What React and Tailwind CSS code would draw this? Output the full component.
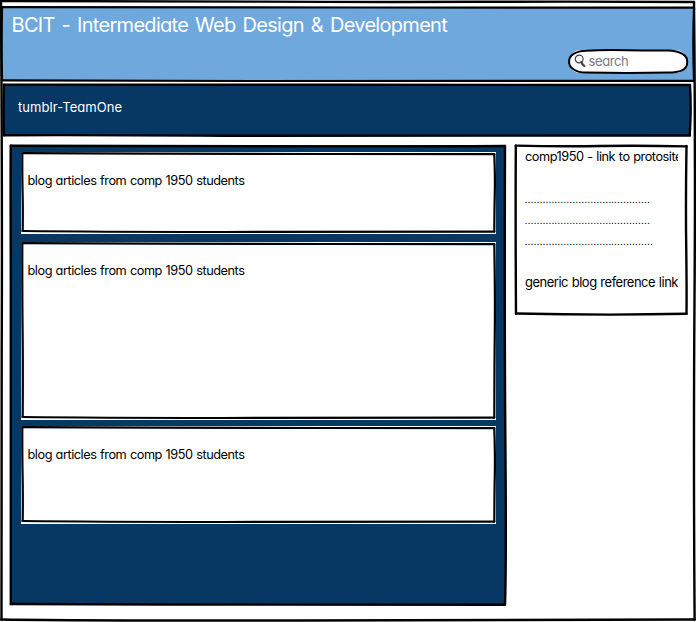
const INK = "stroke-black fill-none";

// Hand-drawn frame: slightly wobbling strokes around the box it sits in.
function Frame({ w, h, d, width = 2.4, fill = "none" }) {
  return (
    <svg className="pointer-events-none absolute inset-0 overflow-visible" width={w} height={h} viewBox={`0 0 ${w} ${h}`} aria-hidden="true">
      {d.map((p) => (
        <path key={p} d={p} className={INK} strokeWidth={width} strokeLinecap="round" strokeLinejoin="round" fill={fill} />
      ))}
    </svg>
  );
}

function articleEdges(h) {
  return [
    `M1.3 1.2 Q80 1.2 130 1.6 T300 2 T473.3 2.2`,
    `M473.3 2.2 Q474.2 ${h * 0.3} 473.8 ${h * 0.5} T473.3 ${h - 2.5}`,
    `M473.3 ${h - 2.3} Q330 ${h - 1.8} 200 ${h - 2} T1.5 ${h - 3}`,
    `M1.7 ${h - 3} Q2 ${h * 0.7} 1.6 ${h * 0.5} T1.3 1.2`,
  ];
}

function Article({ h, className }) {
  return (
    <article className={`relative w-[475px] bg-white pl-[6.5px] pt-[20px] ${className}`}>
      <Frame w={475} h={h} d={articleEdges(h)} width={2.2} />
      <p className="whitespace-nowrap text-[12.75px] leading-[18px] tracking-[-0.47px] [word-spacing:0.5px]">blog articles from comp 1950 students</p>
    </article>
  );
}

function Dots({ children }) {
  return <p className="font-['Liberation_Sans',sans-serif] text-[10.75px] leading-[21px]">{children}</p>;
}

export default function App() {
  return (
    <div className="relative flex h-[622px] w-[696px] flex-col overflow-hidden bg-white pt-[8px] font-['Inter',sans-serif] text-black [font-feature-settings:'cv11']">
      <Frame w={696} h={622} d={["M1 1 Q150 1 260 1.6 T480 1.8 T694 2", "M694 2 Q695.6 150 694.5 300 T694.6 619.5", "M694.6 619.5 Q500 620.2 300 620.5 T1 619.5", "M1.5 619.5 Q1 490 1.7 350 T1 1"]} />
      <header className="relative ml-[2px] flex h-[73px] w-[692px] flex-col bg-[#6fa8dc]">
        <Frame w={692} h={73} width={2.2} d={["M0 -0.8 Q200 -0.2 350 -0.5 T692 -0.3", "M692 0 Q690.6 34 692 72", "M692 72.8 Q450 73.3 250 73 T0 72.3", "M0 72 Q-.6 34 0 -0.5"]} />
        <h1 className="ml-[9.5px] mt-[4px] whitespace-nowrap text-[20px] font-normal leading-[26px] tracking-[-0.7px] text-white [word-spacing:2px]">BCIT - Intermediate Web Design &amp; Development</h1>
        <div className="relative ml-[567px] mt-[12px] flex h-[23px] w-[118px] items-center rounded-full bg-white">
          <Frame w={118} h={23} width={2} d={["M17 0.7 Q35 -0.4 59 0.2 T99 0.5 C111 1 119 5 118.2 12 C118.5 21 109 22.3 99 22.6 Q60 23.2 17 22.6 C7 22.5 0 18 0.1 12 C-.5 5 7 1 17 .7Z"]} />
          <svg className="-mt-[1px] ml-[5px]" width="13" height="14" viewBox="0 0 13 14" fill="none" stroke="#444" strokeLinecap="round" aria-hidden="true">
            <ellipse cx="5.2" cy="5" rx="3.9" ry="3.9" strokeWidth="1.2" />
            <path d="M7.4 7.9 L8.4 10 L10.3 12" strokeWidth="2.2" />
          </svg>
          <span className="-mt-[2px] ml-[1.5px] text-[13px] leading-4 tracking-[-0.4px] text-[#777783]">search</span>
        </div>
      </header>
      <nav className="relative ml-[4px] mt-[3px] flex h-[52px] w-[687px] items-center bg-[#073763] pl-[14px] pb-[6px]">
        <Frame w={687} h={52} d={["M0 .6 Q180 .4 340 .8 T686 1", "M686 1 Q687.4 24 685.8 50", "M686 51.5 Q380 52.6 220 51.7 T0 51.3", "M0 51.3 Q-.8 28 0 .6"]} />
        <span className="text-[13px] leading-4 tracking-[0.06px] text-white">tumblr-TeamOne</span>
      </nav>
      <div className="flex items-start gap-[9px] pl-[10px] pt-[9px]">
        <main className="relative flex h-[460px] w-[496px] flex-col bg-[#073763] pl-[11px] pt-[7px]">
          <Frame w={496} h={460} d={["M.8 .8 Q120 .7 250 1.2 T495 1", "M495 1 Q494.4 180 495.4 300 T495 459.5", "M495 459.8 Q280 460.2 150 459.5 T.8 459", "M.8 459 Q1.2 250 .8 130 T.8 .8"]} />
          <Article h={82} className="h-[82px]" />
          <Article h={178} className="mt-[8px] h-[178px]" />
          <Article h={98} className="mt-[6px] h-[98px]" />
        </main>
        <aside className="relative flex h-[171px] w-[173px] flex-col bg-white pl-[10px] pr-[10px] pt-[3px]">
          <Frame w={173} h={171} d={["M.8 .6 Q45 1.7 85 1 T171.5 1.4", "M171.5 1 Q170.6 55 171.2 100 T171.5 168.8", "M171.5 168.8 Q90 170.6 1 168.5", "M1 168.5 Q.4 80 .8 .6"]} />
          <div className="overflow-hidden whitespace-nowrap text-[12.75px] leading-[21px] tracking-[-0.48px] [word-spacing:0.6px]">
            <p className="-mt-[2px]">comp1950 - link to protosite</p>
            <div className="mt-[22px] -ml-[0.5px] tracking-normal">
              <Dots>..........................................</Dots>
              <Dots>..........................................</Dots>
              <Dots>...........................................</Dots>
            </div>
            <p className="mt-[20px] text-[13px] tracking-[-0.5px]">generic blog reference link</p>
          </div>
        </aside>
      </div>
    </div>
  );
}
